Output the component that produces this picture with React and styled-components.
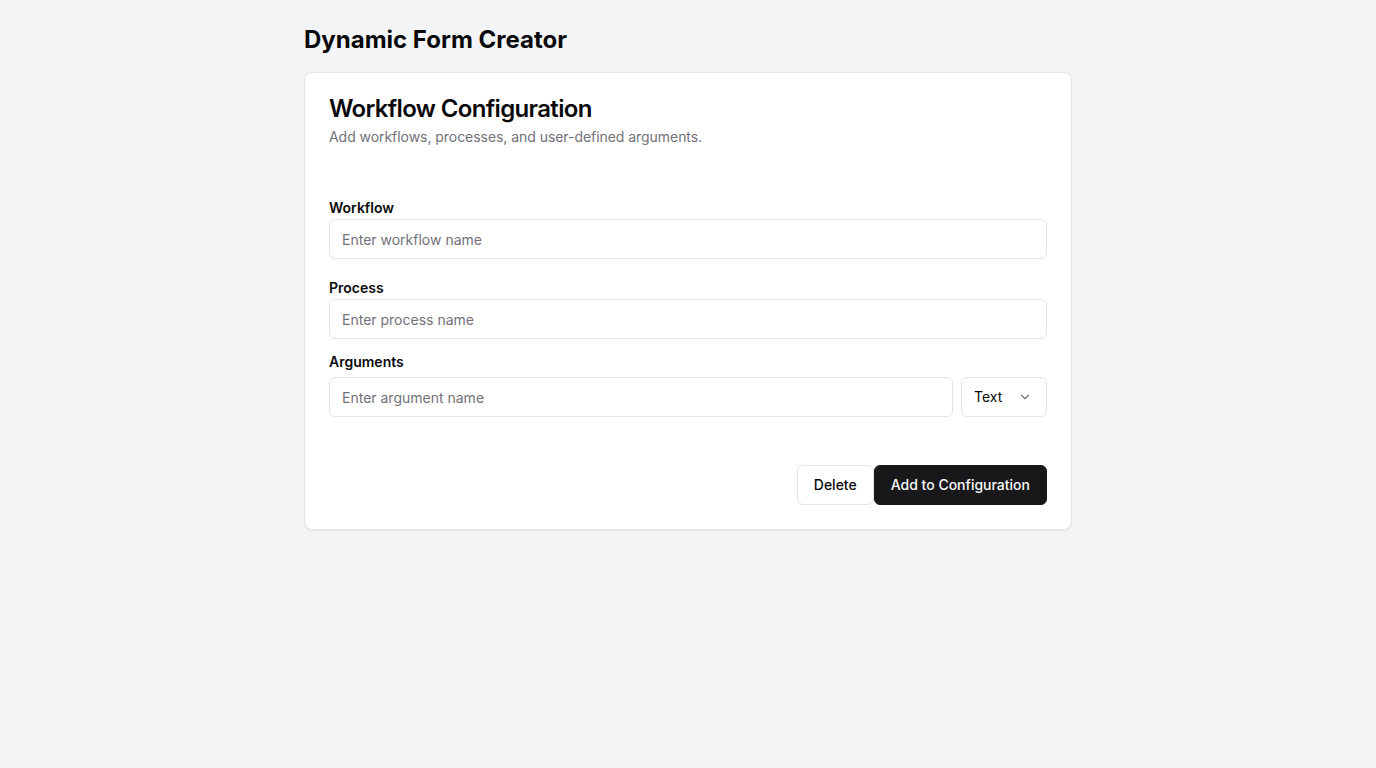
import React, { useState } from "react";
import styled, { createGlobalStyle } from "styled-components";

//global styling
const GlobalStyle = createGlobalStyle`
  * { box-sizing: border-box; }
  body {
    margin: 0;
    background: #f3f4f6;
    font-family: Inter, "Noto Sans", sans-serif;
    color: #09090b;
  }
`;

const Page = styled.main`
  width: 768px;
  margin: 0 auto;
  padding: 24px 0;
`;

const PageTitle = styled.h1`
  margin: 0 0 16px;
  font-size: 24px;
  line-height: 32px;
  font-weight: 700;
`;

const Card = styled.section`
  background: #fff;
  border: 1px solid #e4e4e7;
  border-radius: 8px;
  box-shadow: 0 1px 2px rgba(0, 0, 0, 0.05);
`;

const CardHeader = styled.div`
  display: flex;
  flex-direction: column;
  gap: 6px;
  padding: 24px;
`;

const CardTitle = styled.h2`
  margin: 0;
  font-size: 24px;
  line-height: 24px;
  font-weight: 600;
  letter-spacing: -0.65px;
`;

const CardDescription = styled.p`
  margin: 0;
  font-size: 14px;
  line-height: 20px;
  color: #71717a;
  letter-spacing: -0.05px;
`;

const CardContent = styled.div`
  padding: 27px 24px 0;
`;

const Field = styled.div`
  margin-bottom: ${props => props.spacing || 0}px;
`;

const Label = styled.label`
  display: block;
  font-size: 14px;
  line-height: 20px;
  font-weight: 600;
  margin-bottom: ${props => props.gap || 1}px;
`;

const Input = styled.input`
  display: block;
  width: 100%;
  height: 40px;
  padding: 0 12px;
  border: 1px solid #e4e4e7;
  border-radius: 6px;
  background: #fff;
  font-family: inherit;
  font-size: 14px;
  color: #09090b;
  outline: none;
  &::placeholder { color: #71717a; }
`;

const Row = styled.div`
  display: flex;
  gap: 8px;
`;

const SelectBox = styled.button`
  flex: 0 0 86px;
  height: 40px;
  display: flex;
  align-items: center;
  justify-content: space-between;
  padding: 0 14px 0 12px;
  border: 1px solid #e4e4e7;
  border-radius: 6px;
  background: #fff;
  font-family: inherit;
  font-size: 14px;
  line-height: 20px;
  color: #09090b;
  cursor: pointer;
`;

const CardFooter = styled.div`
  display: flex;
  justify-content: flex-end;
  padding: 48px 24px 24px;
`;

const Button = styled.button`
  height: 40px;
  padding: 0 16px;
  font-family: inherit;
  font-size: 14px;
  line-height: 20px;
  font-weight: 500;
  border-radius: 6px;
  cursor: pointer;
  border: 1px solid ${props => (props.primary ? "#18181b" : "#e4e4e7")};
  background: ${props => (props.primary ? "#18181b" : "#fff")};
  color: ${props => (props.primary ? "#fafafa" : "#09090b")};
`;

const Chevron = () => (
  <svg width="14" height="14" viewBox="0 0 24 24" fill="none" stroke="#71717a" strokeWidth="2" strokeLinecap="round" strokeLinejoin="round">
    <path d="m6 9 6 6 6-6" />
  </svg>
);

export default function App() {
  const [form, setForm] = useState({ workflow: "", process: "", argument: "" });

  const handleChange = event => {
    setForm({ ...form, [event.target.name]: event.target.value });
  };

  return (
    <>
      <GlobalStyle />
      <Page>
        <PageTitle>Dynamic Form Creator</PageTitle>
        <Card>
          <CardHeader>
            <CardTitle>Workflow Configuration</CardTitle>
            <CardDescription>Add workflows, processes, and user-defined arguments.</CardDescription>
          </CardHeader>
          <CardContent>
            <Field spacing={19}>
              <Label htmlFor="workflow">Workflow</Label>
              <Input id="workflow" name="workflow" value={form.workflow} onChange={handleChange} placeholder="Enter workflow name" />
            </Field>
            <Field spacing={13}>
              <Label htmlFor="process">Process</Label>
              <Input id="process" name="process" value={form.process} onChange={handleChange} placeholder="Enter process name" />
            </Field>
            <Field>
              <Label htmlFor="argument" gap={5}>Arguments</Label>
              <Row>
                <Input id="argument" name="argument" value={form.argument} onChange={handleChange} placeholder="Enter argument name" />
                <SelectBox type="button">
                  Text
                  <Chevron />
                </SelectBox>
              </Row>
            </Field>
          </CardContent>
          <CardFooter>
            <Button type="button">Delete</Button>
            <Button type="button" primary>Add to Configuration</Button>
          </CardFooter>
        </Card>
      </Page>
    </>
  );
}
